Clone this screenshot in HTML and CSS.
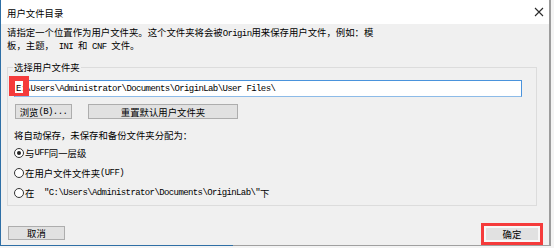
FILE: index.html
```html
<!DOCTYPE html>
<html lang="zh-CN">
<head>
<meta charset="utf-8">
<title>用户文件目录</title>
<link rel="stylesheet" href="styles.css">
</head>
<body>
<div class="window">
  <div class="titlebar">
    <span class="title">用户文件目录</span>
    <svg class="close" width="10" height="10" viewBox="0 0 10 10"><path d="M1 1L9 9M9 1L1 9" stroke="#2b2b2b" stroke-width="1.1" fill="none"/></svg>
  </div>
  <div class="content">
    <p class="desc">请指定一个位置作为用户文件夹。这个文件夹将会被<span class="mono">Origin</span>用来保存用户文件，例如：模<br>板，主题，<span class="mono"> INI </span>和<span class="mono"> CNF </span>文件。</p>
    <fieldset class="group">
      <legend class="group-label">选择用户文件夹</legend>
      <div class="field-wrap">
        <input class="path" type="text" value="E:\Users\Administrator\Documents\OriginLab\User Files\">
        <span class="mark mark-path"></span>
      </div>
      <div class="btn-row">
        <button class="btn btn-browse">浏览<span class="mono">(B)...</span></button>
        <button class="btn btn-reset">重置默认用户文件夹</button>
      </div>
      <div class="assign">将自动保存，未保存和备份文件夹分配为：</div>
      <div class="radio checked"><span class="circle"></span>与<span class="mono">UFF</span>同一层级</div>
      <div class="radio"><span class="circle"></span>在用户文件文件夹<span class="mono">(UFF)</span></div>
      <div class="radio"><span class="circle"></span>在<span class="mono">  "C:\Users\Administrator\Documents\OriginLab\"</span>下</div>
    </fieldset>
  </div>
  <div class="footer">
    <button class="btn btn-cancel">取消</button>
    <div class="ok-wrap">
      <button class="btn btn-ok">确定</button>
      <span class="mark mark-ok"></span>
    </div>
  </div>
  <div class="frame-bottom"></div>
</div>
</body>
</html>
```

FILE: styles.css
```css
* { box-sizing: border-box; }

html, body {
  margin: 0;
  padding: 0;
  background: #f4f4f4;
}

body {
  font-family: "Noto Sans CJK SC", "Noto Sans", sans-serif;
  font-size: 9.4px;
  color: #000;
  width: 554px;
  height: 248px;
  overflow: hidden;
}

.mono {
  font-family: "Liberation Mono", "DejaVu Sans Mono", monospace;
  font-size: 9px;
  letter-spacing: -0.6px;
  white-space: pre;
}

.window {
  width: 551px;
  height: 246px;
  display: flex;
  flex-direction: column;
  background: #f0f0f0;
  border-left: 1px solid #2e6fa6;
  border-right: 2px solid #9c9c9c;
}

.titlebar {
  height: 24px;
  flex: none;
  background: #fff;
  display: flex;
  align-items: center;
  justify-content: space-between;
  padding: 0 5px 0 6px;
}

.title {
  line-height: 10px;
  padding-top: 1px;
}

.close { display: block; }

.content {
  padding: 3px 12px 0 6px;
}

.desc {
  margin: 0;
  line-height: 11px;
}

.group {
  margin: 9px 0 0 0;
  padding: 0 6px 2px 6px;
  border: 1px solid #dcdcdc;
  min-width: 0;
}

.group-label {
  padding: 0 1px;
  margin-left: -1px;
  line-height: 10px;
}

.field-wrap {
  position: relative;
  height: 17px;
  margin-top: 8px;
}

.path {
  display: block;
  width: 508px;
  height: 17px;
  margin: 0;
  border: 1px solid #4a93dc;
  border-bottom-color: #8dbbe8;
  padding: 0 1px;
  background: #fff;
  color: #000;
  font-family: "Liberation Mono", "DejaVu Sans Mono", monospace;
  font-size: 9px;
  letter-spacing: -0.6px;
  outline: none;
}

.mark {
  position: absolute;
  border: 3px solid #f53b3b;
  pointer-events: none;
}

.mark-path {
  left: -5px;
  top: -4px;
  width: 20px;
  height: 20px;
  border-width: 5px 6px 3px 6px;
}

.btn-row {
  display: flex;
  gap: 16px;
  margin-top: 7px;
  padding-left: 1px;
}

.btn {
  font-family: "Noto Sans CJK SC", "Noto Sans", sans-serif;
  font-size: 9.4px;
  color: #000;
  background: #e1e1e1;
  border: 1px solid #adadad;
  padding: 0;
  margin: 0;
  display: flex;
  align-items: center;
  justify-content: center;
  line-height: 10px;
}

.btn-browse { width: 57px; height: 15px; }
.btn-reset { width: 150px; height: 15px; }

.assign {
  margin-top: 11px;
  line-height: 10px;
}

.radio {
  height: 20px;
  display: flex;
  align-items: center;
  line-height: 10px;
}

.assign + .radio { margin-top: 3px; }

.circle {
  width: 10px;
  height: 10px;
  border: 1px solid #333;
  border-radius: 50%;
  background: #fff;
  margin-right: 1px;
  display: flex;
  align-items: center;
  justify-content: center;
  flex: none;
}

.checked .circle::before {
  content: "";
  width: 4px;
  height: 4px;
  border-radius: 50%;
  background: #222;
}

.footer {
  display: flex;
  justify-content: space-between;
  align-items: flex-start;
  margin-top: 20px;
  padding: 0 9px 0 7px;
}

.btn-cancel { width: 57px; height: 14px; }

.ok-wrap { position: relative; }

.btn-ok {
  width: 56px;
  height: 16px;
  border: 2px solid #f7f7f7;
}

.mark-ok {
  left: -3px;
  top: -3px;
  width: 62px;
  height: 22px;
}

.frame-bottom {
  margin-top: auto;
  height: 1px;
  flex: none;
  background: linear-gradient(to right, #2f6fa5 0, #2f6fa5 232px, #a0a0a0 232px);
}
```
